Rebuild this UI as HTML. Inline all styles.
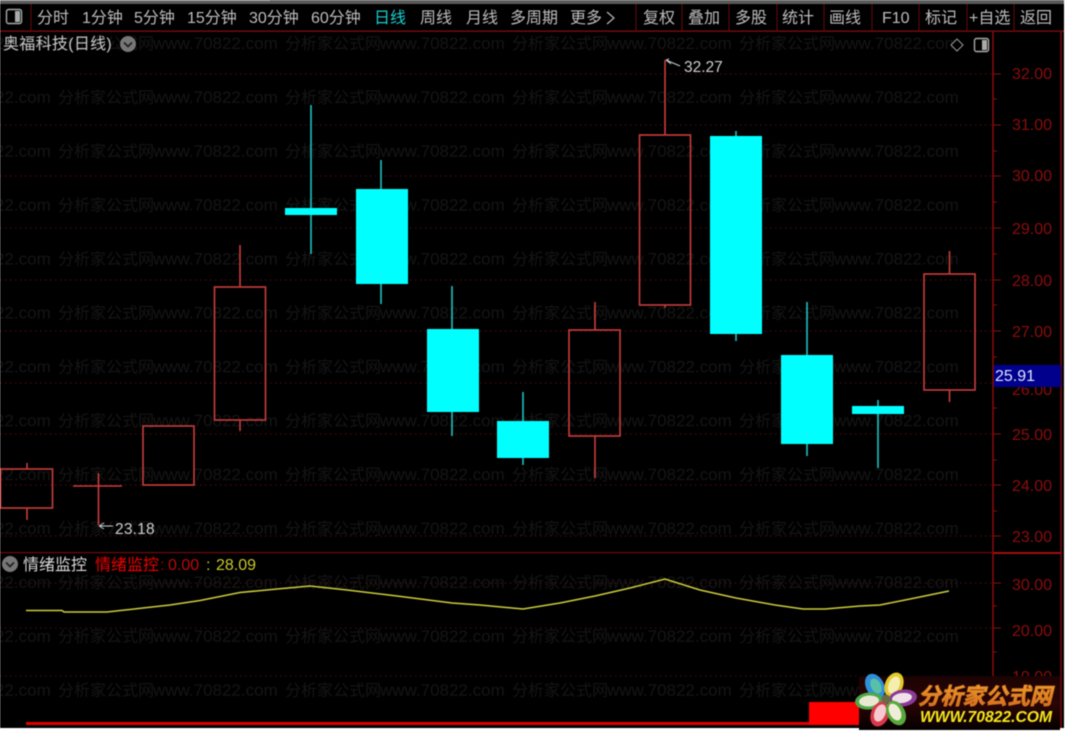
<!DOCTYPE html>
<html lang="zh">
<head>
<meta charset="utf-8">
<title>奥福科技(日线)</title>
<style>
html,body{margin:0;padding:0;background:#fff;width:1068px;height:732px;overflow:hidden}
svg{display:block;filter:blur(.4px)}
text{font-family:"Liberation Sans","Noto Sans CJK SC",sans-serif}
.tb text{font-size:16px;fill:#bdbdbd}
.ax text{font-size:16px;fill:#8c0d0d}
</style>
</head>
<body>
<svg xmlns="http://www.w3.org/2000/svg" width="1068" height="732" viewBox="0 0 1068 732">
<defs>
<pattern id="wm" x="-169" y="31" width="227" height="53.9" patternUnits="userSpaceOnUse">
<text x="0" y="18" font-size="16" fill="#151515">分析家公式网</text>
<text x="95" y="18" font-size="17" fill="#151515">www.70822.com</text>
</pattern>
<linearGradient id="org" x1="0" y1="0" x2="0" y2="1"><stop offset="0" stop-color="#eda52e"/><stop offset="1" stop-color="#d4661f"/></linearGradient>
<linearGradient id="lg" x1="0" y1="0" x2="0" y2="1"><stop offset="0" stop-color="#1c0303"/><stop offset=".5" stop-color="#2a0505"/><stop offset="1" stop-color="#050000"/></linearGradient>
</defs>

<rect width="1068" height="732" fill="#fff"/>
<rect width="1064" height="728" fill="#000"/>
<!-- top strip -->
<rect width="1064" height="4" fill="#5a5a5a"/>
<rect x="0" y="0" width="270" height="1" fill="#888"/>

<!-- watermark -->
<rect x="0" y="31" width="966" height="680" fill="url(#wm)"/>

<!-- toolbar -->
<g class="tb">
<rect x="6.5" y="9.5" width="15" height="14" rx="2" fill="none" stroke="#aaa" stroke-width="1.4"/>
<rect x="15" y="11" width="5" height="11" fill="#aaa"/>
<text x="37" y="23">分时</text>
<text x="82" y="23">1分钟</text>
<text x="134" y="23">5分钟</text>
<text x="187" y="23">15分钟</text>
<text x="249" y="23">30分钟</text>
<text x="311" y="23">60分钟</text>
<text x="374" y="23" style="fill:#18d0d0">日线</text>
<text x="420" y="23">周线</text>
<text x="466" y="23">月线</text>
<text x="510" y="23">多周期</text>
<text x="570" y="23">更多</text>
<path d="M607 12l7 6-7 6" fill="none" stroke="#b9b9b9" stroke-width="1.2"/>
<text x="643" y="23">复权</text>
<text x="688" y="23">叠加</text>
<text x="735" y="23">多股</text>
<text x="782" y="23">统计</text>
<text x="829" y="23">画线</text>
<text x="882" y="23">F10</text>
<text x="925" y="23">标记</text>
<text x="969" y="23">+自选</text>
<text x="1020" y="23">返回</text>
</g>
<path d="M31 4V31M636 4V31M682 4V31M729 4V31M777 4V31M824 4V31M872 4V31M919 4V31M967 4V31M1014 4V31" stroke="#6a0a0a" stroke-width="1"/>
<rect x="0" y="30.5" width="1064" height="1.3" fill="#800c0c"/>

<!-- title -->
<text x="3" y="49" font-size="16" fill="#c8c8c8" letter-spacing=".3">奥福科技(日线)</text>
<circle cx="128" cy="44" r="8" fill="#777"/>
<path d="M124 42.5l4 4 4-4" fill="none" stroke="#222" stroke-width="1.8"/>
<path d="M957 39l6 6-6 6-6-6z" fill="#000" stroke="#999" stroke-width="1"/>
<rect x="974.5" y="38.5" width="14" height="13" rx="2" fill="none" stroke="#aaa" stroke-width="1.4"/>
<rect x="982" y="40" width="5" height="10" fill="#aaa"/>

<!-- dotted grid -->
<g stroke="#5a0a0a" stroke-width="1" stroke-dasharray="1.5 3.5" fill="none">
<path d="M0 74H993M0 125H993M0 176H993M0 228H993M0 280H993M0 331H993M0 383H993M0 434H993M0 485H993M0 536H993"/>
<path d="M0 583H993M0 628H993M0 676H860"/>
</g>

<!-- candles -->
<g stroke="#c83c3c" stroke-width="1.6" fill="none">
<path d="M27 463V469M27 508V520"/><rect x="0.5" y="469" width="52" height="39"/>
<path d="M98.5 473V525M73 486H122"/>
<rect x="143" y="426" width="51" height="59"/>
<path d="M240 245V287M240 420V431"/><rect x="214.5" y="287" width="51" height="133"/>
<path d="M595 302V330M595 436V478"/><rect x="569" y="330" width="51" height="106"/>
<path d="M665 60V135M665 305V308"/><rect x="639.5" y="135" width="51" height="170"/>
<path d="M949.5 251V274M949.5 390V402"/><rect x="924" y="274" width="51" height="116"/>
</g>
<g stroke="#20c0c0" stroke-width="1.6">
<path d="M311 105V254M381 160V304M452 286V436M523 392V465M736 131V341M807 302V456M878 400V468"/>
</g>
<g fill="#00ffff">
<rect x="285" y="208" width="52" height="7"/>
<rect x="356" y="189" width="52" height="95"/>
<rect x="427" y="329" width="52" height="83"/>
<rect x="497" y="421" width="52" height="37"/>
<rect x="710" y="136" width="52" height="198"/>
<rect x="781" y="355" width="52" height="89"/>
<rect x="852" y="406" width="52" height="8"/>
</g>

<!-- annotations -->
<path d="M666 60l3 -1M666 60l14 6M666 60l5 4" stroke="#ccc" stroke-width="1" fill="none"/>
<text x="684" y="72" font-size="15.5" fill="#cfcfcf">32.27</text>
<path d="M99 526H113M99 526l5-3M99 526l5 3" stroke="#ccc" stroke-width="1" fill="none"/>
<text x="115" y="534" font-size="15.5" fill="#cfcfcf" letter-spacing=".2">23.18</text>

<!-- axis -->
<path d="M993 31V728" stroke="#8a0c0c" stroke-width="1.5"/>
<path d="M1061 31V728" stroke="#7a0a0a" stroke-width="1.5"/>
<path d="M993 74H1001M993 125H1001M993 176H1001M993 228H1001M993 280H1001M993 331H1001M993 383H1001M993 434H1001M993 485H1001M993 536H1001M993 99H997M993 151H997M993 202H997M993 254H997M993 305H997M993 357H997M993 408H997M993 460H997M993 511H997M993 583H1001M993 628H1001M993 606H997M993 652H997" stroke="#8a0c0c" stroke-width="1"/>
<g class="ax">
<text x="1012" y="79">32.00</text>
<text x="1012" y="130">31.00</text>
<text x="1012" y="181">30.00</text>
<text x="1012" y="234">29.00</text>
<text x="1012" y="286">28.00</text>
<text x="1012" y="337">27.00</text>
<text x="1012" y="395">26.00</text>
<text x="1012" y="440">25.00</text>
<text x="1012" y="491">24.00</text>
<text x="1012" y="542">23.00</text>
<text x="1012" y="590">30.00</text>
<text x="1012" y="636">20.00</text>
<text x="1012" y="682">10.00</text>
</g>
<rect x="994" y="365" width="67" height="22" fill="#00008c"/>
<text x="995" y="381" font-size="16" fill="#dfe4ff">25.91</text>

<!-- separator -->
<rect x="0" y="552" width="993" height="1.2" fill="#6e0a0a"/>
<rect x="993" y="552" width="68" height="2" fill="#a01010"/>

<!-- lower legend -->
<circle cx="10" cy="564" r="8" fill="#777"/>
<path d="M6 562.5l4 4 4-4" fill="none" stroke="#222" stroke-width="1.8"/>
<text x="23" y="570" font-size="16" fill="#d8d8d8">情绪监控</text>
<text x="95" y="570" font-size="16" fill="#f00000">情绪监控</text>
<text x="160" y="570" font-size="16" fill="#a00000">:</text>
<text x="168" y="570" font-size="16" fill="#c00808">0.00</text>
<text x="206" y="570" font-size="16" fill="#c8c82a">:</text>
<text x="216" y="570" font-size="16" fill="#c8c82a">28.09</text>

<!-- yellow line -->
<polyline fill="none" stroke="#cccc3c" stroke-width="1.5" points="26,610.5 62,610.5 64,612 107,612 143,608 170,605 200,600.5 240,592.5 277,589 310,586 347,590 397,596 452,603 480,605 523,609 560,603 595,596 630,588 665,579 700,590 736,598 775,605 803,609 825,609 860,606 880,605 915,598 949,591"/>

<!-- bottom bars -->
<rect x="26" y="722" width="784" height="3" fill="#e00000"/>
<rect x="809" y="702" width="52" height="23" fill="#ff0000"/>

<!-- logo -->
<rect x="859" y="676" width="201" height="54" fill="url(#lg)"/>
<g transform="translate(886 699)">
<ellipse cx="-11" cy="-13" rx="9" ry="13" fill="#2f8fd8" transform="rotate(-28 -11 -13)"/>
<ellipse cx="-10" cy="-13" rx="5" ry="8" fill="#58c0a8" transform="rotate(-28 -10 -13)"/>
<ellipse cx="8" cy="-14" rx="9" ry="13" fill="#e4c92a" transform="rotate(22 8 -14)"/>
<ellipse cx="8" cy="-14" rx="5.5" ry="9" fill="#f4eeb0" transform="rotate(22 8 -14)"/>
<ellipse cx="-17" cy="2" rx="14" ry="8.5" fill="#4ea84a" transform="rotate(-5 -17 2)"/>
<ellipse cx="-17" cy="2" rx="10" ry="5.5" fill="#e8e8d0" transform="rotate(-5 -17 2)"/>
<ellipse cx="17" cy="-1" rx="14" ry="8.5" fill="#8a3a98" transform="rotate(-8 17 -1)"/>
<ellipse cx="16" cy="-1" rx="10" ry="5" fill="#f0e0e8" transform="rotate(-8 16 -1)"/>
<ellipse cx="-6" cy="15" rx="9" ry="13" fill="#d8384a" transform="rotate(22 -6 15)"/>
<ellipse cx="-6" cy="14" rx="5.5" ry="9" fill="#f6c8d0" transform="rotate(22 -6 14)"/>
<ellipse cx="10" cy="14" rx="9" ry="13" fill="#58a83a" transform="rotate(-28 10 14)"/>
<ellipse cx="9" cy="13" rx="5.5" ry="9" fill="#eeeed8" transform="rotate(-28 9 13)"/>
<circle r="4.5" fill="#6a6a4a"/>
</g>
<text x="918" y="704" font-size="22.5" font-weight="700" font-style="italic" fill="url(#org)" stroke="#d87820" stroke-width=".9" textLength="134" lengthAdjust="spacingAndGlyphs">分析家公式网</text>
<text x="920" y="722" font-size="15.5" font-weight="700" font-style="italic" fill="#f6e81a" textLength="132" lengthAdjust="spacingAndGlyphs">WWW.70822.COM</text>
</svg>
</body>
</html>
